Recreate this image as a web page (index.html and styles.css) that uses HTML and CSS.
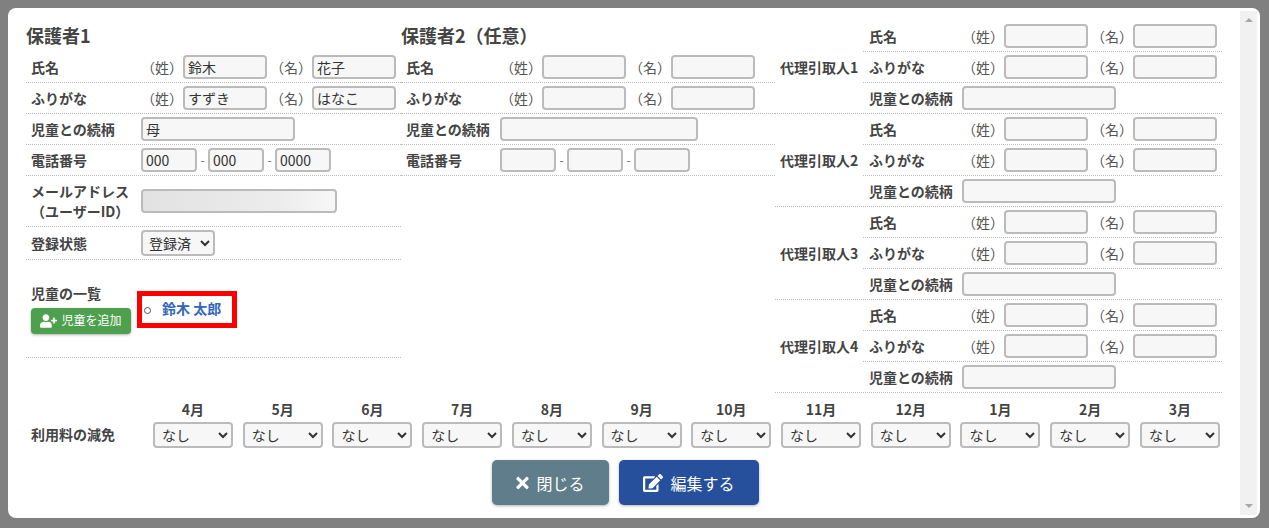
FILE: index.html
```html
<!DOCTYPE html>
<html lang="ja">
<head>
<meta charset="utf-8">
<title>保護者情報</title>
<link rel="stylesheet" href="styles.css">
</head>
<body>
<div class="modal">
  <div class="content">
    <div class="columns">
      <section class="col col-a">
        <h2>保護者1</h2>
        <div class="row"><div class="label">氏名</div><div class="value"><span class="tag">（姓）</span><input class="name" value="鈴木"><span class="tag tag-b">（名）</span><input class="name" value="花子"></div></div>
        <div class="row"><div class="label">ふりがな</div><div class="value"><span class="tag">（姓）</span><input class="name" value="すずき"><span class="tag tag-b">（名）</span><input class="name" value="はなこ"></div></div>
        <div class="row"><div class="label">児童との続柄</div><div class="value"><input class="rel" value="母"></div></div>
        <div class="row"><div class="label">電話番号</div><div class="value"><input class="tel" value="000"><span class="dash">-</span><input class="tel" value="000"><span class="dash">-</span><input class="tel" value="0000"></div></div>
        <div class="row row-mail"><div class="label label-mail">メールアドレス<br>（ユーザーID）</div><div class="value"><input class="mail blurred"></div></div>
        <div class="row row-state"><div class="label">登録状態</div><div class="value"><select class="state"><option>登録済</option></select></div></div>
        <div class="row row-kids">
          <div class="kids-side">
            <div class="kids-title">児童の一覧</div>
            <button class="add" type="button"><svg class="ic-user" viewBox="0 0 640 512"><path d="M624 208h-64v-64c0-8.8-7.2-16-16-16h-32c-8.8 0-16 7.2-16 16v64h-64c-8.8 0-16 7.2-16 16v32c0 8.8 7.2 16 16 16h64v64c0 8.8 7.2 16 16 16h32c8.800 0 16-7.200 16-16v-64h64c8.800 0 16-7.200 16-16v-32c0-8.800-7.200-16-16-16zm-400 48c70.700 0 128-57.300 128-128S294.700 0 224 0 96 57.300 96 128s57.300 128 128 128zm89.600 32h-16.700c-22.200 10.200-46.900 16-72.900 16s-50.600-5.800-72.900-16h-16.700C60.200 288 0 348.200 0 422.400V464c0 26.500 21.500 48 48 48h352c26.500 0 48-21.500 48-48v-41.600c0-74.200-60.200-134.400-134.400-134.400z"/></svg>児童を追加</button>
          </div>
          <div class="mark"><span class="ring"></span><a class="kid" href="#">鈴木 太郎</a></div>
        </div>
      </section>

      <section class="col col-b">
        <h2>保護者2（任意）</h2>
        <div class="row"><div class="label">氏名</div><div class="value"><span class="tag">（姓）</span><input class="name"><span class="tag tag-b">（名）</span><input class="name"></div></div>
        <div class="row"><div class="label">ふりがな</div><div class="value"><span class="tag">（姓）</span><input class="name"><span class="tag tag-b">（名）</span><input class="name"></div></div>
        <div class="row"><div class="label">児童との続柄</div><div class="value"><input class="rel rel-wide"></div></div>
        <div class="row"><div class="label">電話番号</div><div class="value"><input class="tel"><span class="dash">-</span><input class="tel"><span class="dash">-</span><input class="tel"></div></div>
      </section>

      <section class="col col-c">
        <div class="group">
          <div class="group-label">代理引取人1</div>
          <div class="group-rows">
            <div class="row"><div class="label">氏名</div><div class="value"><span class="tag">（姓）</span><input class="name"><span class="tag tag-b">（名）</span><input class="name"></div></div>
            <div class="row"><div class="label">ふりがな</div><div class="value"><span class="tag">（姓）</span><input class="name"><span class="tag tag-b">（名）</span><input class="name"></div></div>
            <div class="row row-last"><div class="label">児童との続柄</div><div class="value"><input class="rel"></div></div>
          </div>
        </div>
        <div class="group">
          <div class="group-label">代理引取人2</div>
          <div class="group-rows">
            <div class="row"><div class="label">氏名</div><div class="value"><span class="tag">（姓）</span><input class="name"><span class="tag tag-b">（名）</span><input class="name"></div></div>
            <div class="row"><div class="label">ふりがな</div><div class="value"><span class="tag">（姓）</span><input class="name"><span class="tag tag-b">（名）</span><input class="name"></div></div>
            <div class="row row-last"><div class="label">児童との続柄</div><div class="value"><input class="rel"></div></div>
          </div>
        </div>
        <div class="group">
          <div class="group-label">代理引取人3</div>
          <div class="group-rows">
            <div class="row"><div class="label">氏名</div><div class="value"><span class="tag">（姓）</span><input class="name"><span class="tag tag-b">（名）</span><input class="name"></div></div>
            <div class="row"><div class="label">ふりがな</div><div class="value"><span class="tag">（姓）</span><input class="name"><span class="tag tag-b">（名）</span><input class="name"></div></div>
            <div class="row row-last"><div class="label">児童との続柄</div><div class="value"><input class="rel"></div></div>
          </div>
        </div>
        <div class="group">
          <div class="group-label">代理引取人4</div>
          <div class="group-rows">
            <div class="row"><div class="label">氏名</div><div class="value"><span class="tag">（姓）</span><input class="name"><span class="tag tag-b">（名）</span><input class="name"></div></div>
            <div class="row"><div class="label">ふりがな</div><div class="value"><span class="tag">（姓）</span><input class="name"><span class="tag tag-b">（名）</span><input class="name"></div></div>
            <div class="row row-last"><div class="label">児童との続柄</div><div class="value"><input class="rel"></div></div>
          </div>
        </div>
      </section>
    </div>

    <div class="fee">
      <div class="fee-label">利用料の減免</div>
      <div class="months">
        <div class="month"><div class="month-name">4月</div><select class="fee-select"><option>なし</option></select></div>
        <div class="month"><div class="month-name">5月</div><select class="fee-select"><option>なし</option></select></div>
        <div class="month"><div class="month-name">6月</div><select class="fee-select"><option>なし</option></select></div>
        <div class="month"><div class="month-name">7月</div><select class="fee-select"><option>なし</option></select></div>
        <div class="month"><div class="month-name">8月</div><select class="fee-select"><option>なし</option></select></div>
        <div class="month"><div class="month-name">9月</div><select class="fee-select"><option>なし</option></select></div>
        <div class="month"><div class="month-name">10月</div><select class="fee-select"><option>なし</option></select></div>
        <div class="month"><div class="month-name">11月</div><select class="fee-select"><option>なし</option></select></div>
        <div class="month"><div class="month-name">12月</div><select class="fee-select"><option>なし</option></select></div>
        <div class="month"><div class="month-name">1月</div><select class="fee-select"><option>なし</option></select></div>
        <div class="month"><div class="month-name">2月</div><select class="fee-select"><option>なし</option></select></div>
        <div class="month"><div class="month-name">3月</div><select class="fee-select"><option>なし</option></select></div>
      </div>
    </div>

    <div class="actions">
      <button class="btn btn-close" type="button"><svg class="ic-times" viewBox="0 0 352 512"><path d="M242.720 256l100.070-100.070c12.280-12.280 12.280-32.190 0-44.480l-22.240-22.240c-12.280-12.280-32.190-12.280-44.480 0L176 189.280 75.930 89.210c-12.280-12.280-32.190-12.280-44.480 0L9.210 111.450c-12.280 12.280-12.280 32.190 0 44.480L109.280 256 9.210 356.070c-12.280 12.280-12.280 32.190 0 44.480l22.240 22.240c12.280 12.280 32.200 12.280 44.480 0L176 322.720l100.070 100.070c12.280 12.280 32.200 12.280 44.480 0l22.240-22.240c12.280-12.280 12.280-32.190 0-44.480L242.720 256z"/></svg>閉じる</button>
      <button class="btn btn-edit" type="button"><svg class="ic-edit" viewBox="0 0 576 512"><path d="M402.600 83.200l90.200 90.200c3.800 3.800 3.800 10 0 13.800L274.400 405.600l-92.800 10.300c-12.400 1.400-22.900-9.100-21.500-21.500l10.300-92.800L388.800 83.200c3.800-3.800 10-3.800 13.800 0zm162-22.900l-48.800-48.800c-15.200-15.200-39.900-15.200-55.200 0l-35.400 35.400c-3.800 3.800-3.800 10 0 13.800l90.200 90.200c3.800 3.800 10 3.800 13.800 0l35.400-35.400c15.200-15.300 15.200-40 0-55.200zM384 346.200V448H64V128h229.800c3.200 0 6.200-1.300 8.500-3.500l40-40c7.600-7.600 2.200-20.500-8.500-20.500H48C21.500 64 0 85.500 0 112v352c0 26.500 21.500 48 48 48h352c26.500 0 48-21.500 48-48V306.200c0-10.700-12.900-16-20.500-8.500l-40 40c-2.200 2.300-3.500 5.300-3.500 8.500z"/></svg>編集する</button>
    </div>
  </div>
  <div class="scrollbar"><span class="arrow-up"></span><span class="arrow-down"></span></div>
</div>
</body>
</html>
```

FILE: styles.css
```css
* { box-sizing: border-box; }
html, body { height: 100%; }
body {
  margin: 0;
  padding: 8px 9px 10px 8px;
  background: #808080;
  overflow: hidden;
  color: #444;
  font-family: "Noto Sans CJK JP", "Noto Sans", sans-serif;
  font-size: 14px;
  line-height: 20px;
}
.modal {
  display: flex;
  height: 510px;
  background: #fff;
  border-radius: 8px;
  overflow: hidden;
}
.content {
  flex: 1;
  min-width: 0;
  padding: 13px 18px 0;
}
.columns { display: flex; }
.col-a { width: 375px; }
.col-b { width: 374px; }
.col-c { width: 447px; }
h2 {
  margin: 0;
  height: 31px;
  font-size: 18px;
  line-height: 28px;
  font-weight: 700;
}
.row {
  display: flex;
  align-items: center;
  height: 31px;
  padding-left: 5px;
  border-bottom: 1px dotted #bbb;
}
.label {
  width: 110px;
  flex: none;
  font-weight: 700;
  white-space: nowrap;
}
.col-b .label { width: 94px; }
.value { display: flex; align-items: center; }
.tag {
  width: 42px;
  flex: none;
  text-align: center;
  color: #555;
}
.value .tag-b { width: 45px; padding-left: 3px; }
input, select {
  height: 24px;
  padding: 0 3px;
  border: 2px solid #bbb;
  border-radius: 4px;
  background: #f7f7f7;
  color: #333;
  font-family: inherit;
  font-size: 14px;
  outline: none;
}
.name { width: 84px; }
.rel { width: 154px; }
.rel-wide { width: 198px; }
.tel { width: 56px; }
.dash { width: 11px; text-align: center; font-size: 12px; color: #666; }
.mail { width: 196px; }
.blurred { background: linear-gradient(90deg, #e2e2e2, #ececec 70%, #f7f7f7); }
.row-mail { height: 51px; }
.label-mail { text-align: center; padding-right: 12px; }
.row-state { height: 33px; }
.state { width: 74px; height: 26px; padding: 0 2px; }
.row-kids { height: 98px; align-items: flex-start; }
.kids-side { width: 106px; flex: none; padding-top: 21px; }
.kids-title { font-weight: 700; line-height: 24px; height: 27px; }
.add {
  display: flex;
  align-items: center;
  justify-content: center;
  width: 100px;
  height: 26px;
  padding: 0 0 3px;
  border: 0;
  border-radius: 4px;
  background: #4e9f4e;
  color: #fff;
  font-family: inherit;
  font-size: 12px;
  box-shadow: 0 1px 3px rgba(0, 0, 0, .3);
}
.ic-user { width: 17px; height: 14px; margin: 2px 4px 0 0; fill: #fff; }
.mark {
  display: flex;
  align-items: center;
  width: 100px;
  height: 37px;
  margin-top: 31px;
  padding: 0 0 4px 2px;
  border: 5px solid #f00;
}
.ring {
  width: 7px;
  height: 7px;
  margin: 5px 11px 0 0;
  border: 1px solid #555;
  border-radius: 50%;
}
.kid {
  color: #3366bb;
  font-weight: 700;
  text-decoration: none;
  white-space: nowrap;
}
.group { display: flex; align-items: center; border-bottom: 1px dotted #bbb; }
.group-label {
  width: 88px;
  flex: none;
  padding-left: 5px;
  font-weight: 700;
  white-space: nowrap;
}
.group-rows { flex: 1; }
.group-rows .row { padding-left: 6px; }
.group-rows .row-last { height: 30px; border-bottom: 0; }
.group-rows .label { width: 93px; }
.fee {
  display: flex;
  align-items: flex-end;
  padding: 6px 2px 0 5px;
}
.fee-label {
  width: 122px;
  flex: none;
  height: 26px;
  line-height: 25px;
  font-weight: 700;
}
.months { flex: 1; display: flex; justify-content: space-between; }
.month { width: 80px; text-align: center; }
.month-name { height: 23px; font-weight: 700; }
.fee-select { display: block; width: 80px; height: 26px; padding: 0 3px; }
.actions {
  display: flex;
  justify-content: center;
  gap: 10px;
  margin-top: 12px;
  padding-left: 3px;
}
.btn {
  display: flex;
  align-items: center;
  justify-content: center;
  height: 45px;
  border: 0;
  border-radius: 5px;
  color: #fff;
  font-family: inherit;
  font-size: 16px;
  box-shadow: 0 1px 3px rgba(0, 0, 0, .3);
}
.btn-close { width: 117px; background: #607d8b; }
.btn-edit { width: 140px; background: #26509b; }
.ic-times { width: 13px; height: 18px; margin-right: 7px; fill: #fff; }
.ic-edit { width: 20px; height: 18px; margin-right: 7px; fill: #fff; }
.scrollbar {
  display: flex;
  flex-direction: column;
  justify-content: space-between;
  align-items: center;
  width: 17px;
  margin: 3px 3px 3px 0;
  padding: 7px 0;
  background: #f1f1f1;
}
.arrow-up { border: 4px solid transparent; border-top: 0; border-bottom: 4px solid #a8a8a8; }
.arrow-down { border: 4px solid transparent; border-bottom: 0; border-top: 4px solid #a8a8a8; }
```
